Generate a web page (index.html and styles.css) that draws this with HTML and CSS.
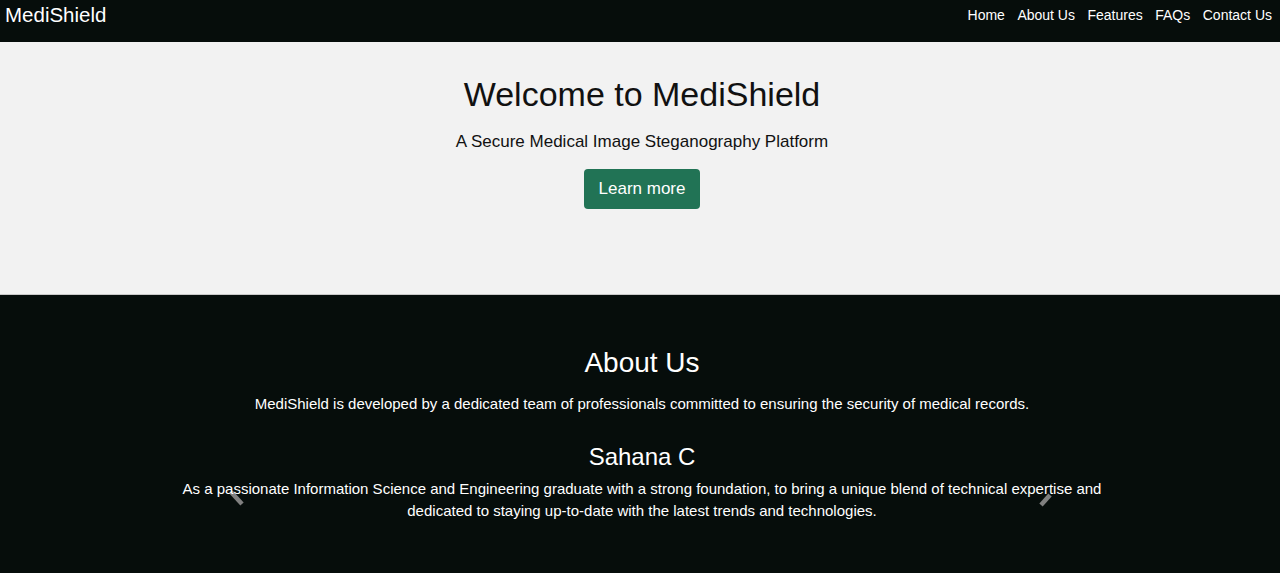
FILE: index.html
```html
<!DOCTYPE html>
<html>
<head>
<meta charset="utf-8">
<title>MediShield</title>
<link rel="stylesheet" href="styles.css">
</head>
<body>
<nav class="navbar">
  <a class="brand" href="#">MediShield</a>
  <ul class="nav-links">
    <li><a href="#">Home</a></li>
    <li><a href="#">About Us</a></li>
    <li><a href="#">Features</a></li>
    <li><a href="#">FAQs</a></li>
    <li><a href="#">Contact Us</a></li>
  </ul>
</nav>
<section class="hero">
  <h1 class="hero-title">Welcome to MediShield</h1>
  <p class="hero-sub">A Secure Medical Image Steganography Platform</p>
  <a class="btn" href="#">Learn more</a>
</section>
<section class="about">
  <h2 class="about-title">About Us</h2>
  <p class="about-text">MediShield is developed by a dedicated team of professionals committed to ensuring the security of medical records.</p>
  <div class="carousel">
    <svg class="ctrl ctrl-prev" width="16" height="18" viewBox="0 0 16 18"><line x1="2" y1="3" x2="13" y2="15" stroke="#808080" stroke-width="4.5"/></svg>
    <svg class="ctrl ctrl-next" width="16" height="18" viewBox="0 0 16 18"><line x1="14" y1="6" x2="5" y2="16" stroke="#808080" stroke-width="4.5"/></svg>
    <div class="member">
      <h3 class="member-name">Sahana C</h3>
      <p class="member-text">As a passionate Information Science and Engineering graduate with a strong foundation, to bring a unique blend of technical expertise and dedicated to staying up-to-date with the latest trends and technologies.</p>
    </div>
  </div>
</section>
</body>
</html>
```
FILE: styles.css
```css
* { box-sizing: border-box; }
html, body { margin: 0; padding: 0; }
body {
  font-family: "Liberation Sans", Arial, sans-serif;
  background: #060d0b;
  color: #fff;
  height: 573px;
  overflow: hidden;
}
.navbar {
  height: 42px;
  background: #060d0b;
  display: flex;
  justify-content: space-between;
  align-items: flex-start;
  padding: 0 8px 0 5px;
}
.brand {
  color: #fff;
  text-decoration: none;
  font-size: 20.5px;
  line-height: 30px;
}
.nav-links {
  list-style: none;
  margin: 0;
  padding: 0;
  display: flex;
  gap: 12.5px;
}
.nav-links a {
  color: #fff;
  text-decoration: none;
  font-size: 14px;
  line-height: 30px;
}
.hero {
  background: #f2f2f2;
  height: 253px;
  border-bottom: 1px solid #c9c9c9;
  display: flex;
  flex-direction: column;
  align-items: center;
  padding: 31px 0 0 4px;
  color: #111;
}
.hero-title {
  margin: 0;
  font-size: 34px;
  font-weight: normal;
  line-height: 42px;
}
.hero-sub {
  margin: 16px 0 0;
  font-size: 17px;
  line-height: 22px;
}
.btn {
  margin-top: 16px;
  display: inline-block;
  width: 116px;
  height: 40px;
  line-height: 40px;
  text-align: center;
  background: #217355;
  color: #fff;
  text-decoration: none;
  border-radius: 4px;
  font-size: 17px;
}
.about {
  display: flex;
  flex-direction: column;
  align-items: center;
  padding: 51px 0 0 4px;
}
.about-title {
  margin: 0;
  font-size: 28px;
  font-weight: normal;
  line-height: 34px;
}
.about-text {
  margin: 14px 0 0;
  font-size: 15px;
  line-height: 20px;
}
.carousel {
  position: relative;
  width: 940px;
  margin-top: 28px;
}
.member {
  position: relative;
  text-align: center;
}
.member-name {
  margin: 0;
  font-size: 24px;
  font-weight: normal;
  line-height: 30px;
}
.member-text {
  margin: 6px 0 0;
  font-size: 15px;
  line-height: 22px;
}
.ctrl {
  position: absolute;
  top: 47px;
}
.ctrl-prev { left: 57px; }
.ctrl-next { right: 60px; }
```
